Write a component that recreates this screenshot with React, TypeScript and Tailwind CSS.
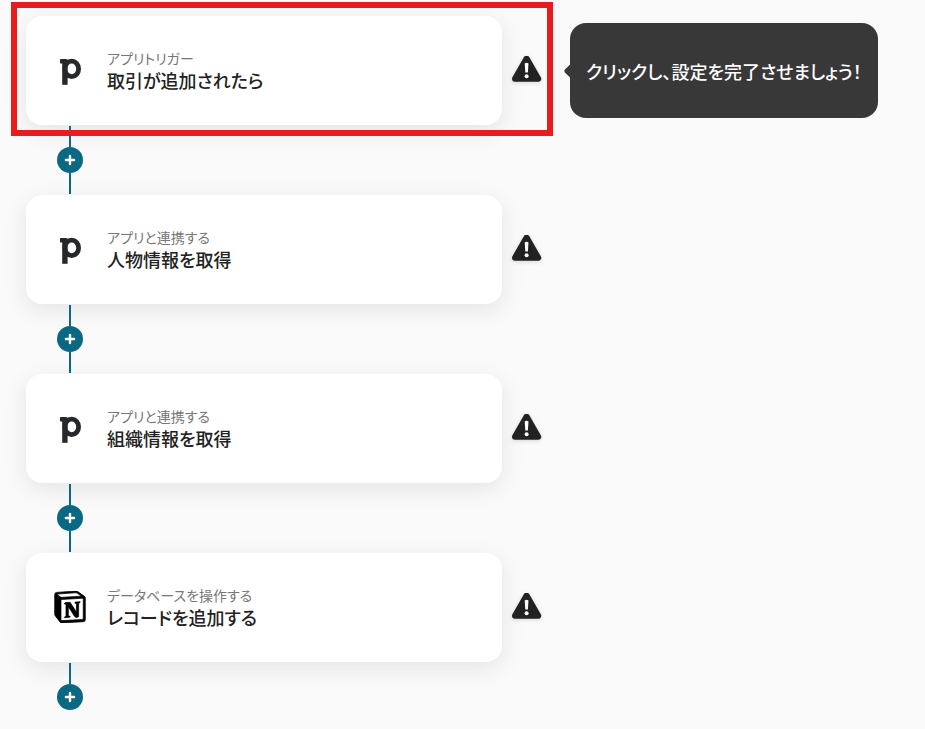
import { SiNotion } from "react-icons/si";
import { clsx } from "clsx";
import type { ComponentType } from "react";

/* ─── Icons ─── */

function PipedriveIcon() {
  return (
    <svg width="32" height="32" viewBox="0 0 32 32" fill="none" aria-hidden="true">
      <rect x="6" y="5" width="6.5" height="4.4" rx="0.4" fill="#26292c" />
      <rect x="8.2" y="5.4" width="5.4" height="25.4" fill="#26292c" />
      <ellipse cx="17.7" cy="14.9" rx="6.9" ry="7.7" stroke="#26292c" strokeWidth="4.8" />
    </svg>
  );
}

function NotionIcon() {
  return <SiNotion size={32} strokeWidth={0.5} className="stroke-black text-black" aria-hidden="true" />;
}

function WarningIcon() {
  return (
    <svg width="30" height="30" viewBox="0 0 30 30" role="img" aria-label="警告" className="shrink-0 drop-shadow-sm">
      <path
        d="M14.6 2.6 26.2 22.8H3Z"
        fill="#222"
        stroke="#222"
        strokeWidth="6"
        strokeLinejoin="round"
      />
      <path d="M12.7 7.4q1.9-1.4 3.8 0l-.6 9h-2.6Z" fill="#fff" />
      <circle cx="14.6" cy="20.3" r="2" fill="#fff" />
    </svg>
  );
}

/* ─── Flow step ─── */

interface Step {
  icon: ComponentType;
  category: string;
  title: string;
  hint?: string;
}

const steps: Step[] = [
  {
    icon: PipedriveIcon,
    category: "アプリトリガー",
    title: "取引が追加されたら",
    hint: "クリックし、設定を完了させましょう！",
  },
  { icon: PipedriveIcon, category: "アプリと連携する", title: "人物情報を取得" },
  { icon: PipedriveIcon, category: "アプリと連携する", title: "組織情報を取得" },
  { icon: NotionIcon, category: "データベースを操作する", title: "レコードを追加する" },
];

function HintBubble({ text }: { text: string }) {
  return (
    <div
      role="tooltip"
      className="relative ml-[18px] flex h-[95px] shrink-0 items-center rounded-2xl bg-[#383838] px-4"
    >
      <span className="absolute top-1/2 -left-1 size-3 -translate-y-1/2 rotate-45 rounded-xs bg-[#383838]" />
      <p className="relative text-lg font-medium text-white">{text}</p>
    </div>
  );
}

function StepRow({ icon: Icon, category, title, hint }: Step) {
  return (
    <div className="relative flex items-center gap-2.5">
      <button
        type="button"
        className="flex h-[109px] max-w-[476px] min-w-0 flex-1 items-center gap-[21px] rounded-2xl bg-white pb-0.5 pl-7 text-left shadow-[0_6px_24px_rgba(0,0,0,0.09)]"
      >
        <span className="flex size-8 shrink-0 items-center justify-center">
          <Icon />
        </span>
        <span className="flex flex-col">
          <span className="text-sm text-[#777]">{category}</span>
          <span className="text-lg leading-6 font-medium text-[#222]">{title}</span>
        </span>
      </button>
      <WarningIcon />
      {hint && <HintBubble text={hint} />}
    </div>
  );
}

function Connector({ last }: { last: boolean }) {
  return (
    <div className="relative ml-[31px] flex w-[26px] flex-col items-center pt-px">
      <span className="h-[21px] w-0.5 bg-[#0a6883]" />
      <button
        type="button"
        aria-label="ステップを追加"
        className="flex size-[26px] items-center justify-center rounded-full bg-[#0a6883]"
      >
        <svg width="12" height="12" viewBox="0 0 12 12" aria-hidden="true">
          <path d="M6 1.9v8.2M1.9 6h8.2" stroke="#fff" strokeWidth="2.4" strokeLinecap="round" />
        </svg>
      </button>
      <span className={clsx("mb-px h-[21px] w-0.5", !last && "bg-[#0a6883]")} />
    </div>
  );
}

export default function App() {
  return (
    <main className="relative min-h-screen bg-[#fafafa] px-[26px] pt-4 font-['Noto_Sans_CJK_JP',sans-serif] [font-feature-settings:'palt']">
      {steps.map((step, i) => (
        <div key={step.title}>
          <StepRow {...step} />
          <Connector last={i === steps.length - 1} />
        </div>
      ))}

      {/* Highlight around the first step */}
      <div className="pointer-events-none absolute top-0.5 left-[11px] h-[134px] w-[542px] border-6 border-[#e81c1c]" />
    </main>
  );
}
